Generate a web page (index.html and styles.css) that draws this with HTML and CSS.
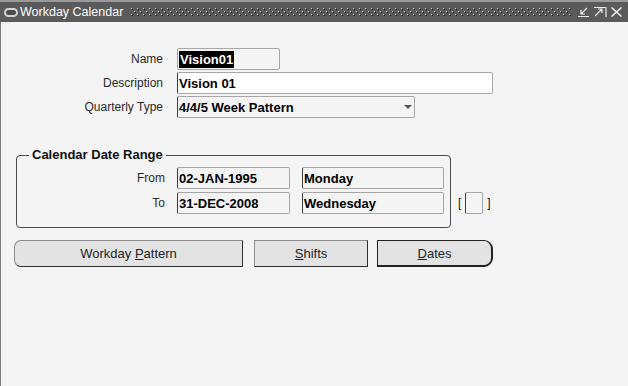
FILE: index.html
```html
<!DOCTYPE html>
<html>
<head>
<meta charset="utf-8">
<title>Workday Calendar</title>
<link rel="stylesheet" href="styles.css">
</head>
<body>
<div class="window">
  <div class="titlebar">
    <span class="app-icon"></span>
    <span class="title">Workday Calendar</span>
    <svg class="dots" height="9" preserveAspectRatio="none">
      <defs>
        <pattern id="dotpat" width="6" height="6" patternUnits="userSpaceOnUse">
          <rect x="0" y="0" width="1" height="1" fill="#cfcfcf"/>
          <rect x="1" y="1" width="1" height="1" fill="#111"/>
          <rect x="3" y="3" width="1" height="1" fill="#cfcfcf"/>
          <rect x="4" y="4" width="1" height="1" fill="#111"/>
        </pattern>
      </defs>
      <rect x="0" y="0" width="100%" height="9" fill="url(#dotpat)"/>
    </svg>
    <div class="controls">
      <svg class="ctl ctl-min" width="11" height="10" viewBox="0 0 11 10">
        <path d="M9 1 L3 7 M3 3 V7 H7 M0 9.5 H11" stroke="#eeeeee" stroke-width="1.2" fill="none"/>
      </svg>
      <svg class="ctl ctl-max" width="13" height="10" viewBox="0 0 13 10">
        <path d="M0 0.5 H11 M12 0 V10 M1 9 L8 2 M4 2 H8 V6" stroke="#eeeeee" stroke-width="1.2" fill="none"/>
      </svg>
      <svg class="ctl ctl-close" width="11" height="10" viewBox="0 0 11 10">
        <path d="M0.5 0.5 L10.5 9.5 M10.5 0.5 L0.5 9.5" stroke="#eeeeee" stroke-width="1.5" fill="none"/>
      </svg>
    </div>
  </div>

  <div class="content">
    <div class="form">
      <span class="lbl">Name</span>
      <div class="field ro f-name"><span class="sel">Vision01</span></div>
      <span class="lbl">Description</span>
      <div class="field white f-desc">Vision 01</div>
      <span class="lbl">Quarterly Type</span>
      <div class="field ro f-select"><span class="sel-text">4/4/5 Week Pattern</span><span class="arrow"></span></div>
    </div>

    <div class="range-row">
      <fieldset class="group">
        <legend>Calendar Date Range</legend>
        <div class="dates">
          <span class="lbl">From</span>
          <div class="field ro f-date">02-JAN-1995</div>
          <div class="field ro f-day">Monday</div>
          <span class="lbl">To</span>
          <div class="field ro f-date">31-DEC-2008</div>
          <div class="field ro f-day">Wednesday</div>
        </div>
      </fieldset>
      <div class="bracket"><span>[</span><span class="check"></span><span>]</span></div>
    </div>

    <div class="buttons">
      <button class="btn btn-wide"><span>Workday <u>P</u>attern</span></button>
      <button class="btn btn-shifts"><span><u>S</u>hifts</span></button>
      <button class="btn btn-dates"><span><u>D</u>ates</span></button>
    </div>
  </div>
</div>
</body>
</html>
```

FILE: styles.css
```css
* { box-sizing: border-box; }

html, body {
  margin: 0;
  padding: 0;
}

body {
  width: 628px;
  height: 386px;
  overflow: hidden;
  background: #f4f4f4;
  font-family: "Liberation Sans", Arial, sans-serif;
  font-size: 12px;
  color: #2a2a2a;
}

.window {
  height: 386px;
  display: flex;
  flex-direction: column;
}

/* ---------- title bar ---------- */
.titlebar {
  height: 22px;
  flex: none;
  border-top: 2px solid #9a9a9a;
  background: #5a5a5a;
  display: flex;
  align-items: center;
  padding: 0 4px 0 4px;
  color: #ffffff;
}

.app-icon {
  flex: none;
  width: 14px;
  height: 9px;
  border: 2px solid #d6d6d6;
  border-radius: 5px;
  background: #4c4c4c;
  margin-right: 2px;
}

.title {
  font-size: 12.5px;
  line-height: 20px;
  white-space: nowrap;
}

.dots {
  flex: 1;
  height: 9px;
  margin-left: 8px;
  margin-right: 7px;
}

.controls {
  display: flex;
  align-items: center;
}

.ctl { display: block; }
.ctl-max { margin-left: 5px; }
.ctl-close { margin-left: 4px; margin-right: 2px; }

/* ---------- content ---------- */
.content {
  flex: 1;
  border-left: 1px solid #7c7c7c;
}

.form {
  margin-top: 26px;
  display: grid;
  grid-template-columns: 162px auto;
  column-gap: 14px;
  row-gap: 2px;
  align-items: center;
  justify-items: start;
}

.lbl {
  justify-self: end;
  font-size: 12px;
  color: #2a2a2a;
  white-space: nowrap;
}

.field {
  height: 22px;
  display: flex;
  align-items: center;
  padding-left: 1px;
  border: 1px solid #a6a6a6;
  border-left-color: #3c3c3c;
  border-radius: 2px;
  font-size: 13px;
  font-weight: bold;
  color: #000;
  white-space: nowrap;
  overflow: hidden;
}

.field.ro { background: #f4f4f4; }
.field.white { background: #ffffff; }

.f-name { width: 103px; border-left-color: #a6a6a6; }
.f-desc { width: 316px; }
.f-select { width: 238px; }

.sel {
  background: #000;
  color: #fff;
  line-height: 17px;
  padding: 0 1px;
}

.sel-text { flex: 1; }

.arrow {
  width: 0;
  height: 0;
  border-left: 4px solid transparent;
  border-right: 4px solid transparent;
  border-top: 4px solid #555;
  margin-right: 2px;
}

/* ---------- date range group ---------- */
.range-row {
  display: flex;
  align-items: flex-end;
}

.group {
  margin: 29px 0 0 15px;
  padding: 4px 6px 13px 0;
  border: 1px solid #4a4a4a;
  border-radius: 4px;
  min-width: 0;
}

.group legend {
  margin-left: 12px;
  padding: 0 3px;
  font-size: 13px;
  font-weight: bold;
  line-height: 16px;
  color: #111;
}

.dates {
  display: grid;
  grid-template-columns: 148px 113px 142px;
  column-gap: 12px;
  row-gap: 3px;
  align-items: center;
}

.dates .lbl { justify-self: end; }

.bracket {
  display: flex;
  align-items: center;
  gap: 4px;
  margin: 0 0 14px 7px;
  height: 22px;
  font-size: 12px;
  color: #222;
}

.check {
  width: 18px;
  height: 22px;
  border: 1px solid #a6a6a6;
  border-left-color: #3c3c3c;
  border-radius: 2px;
  background: #f4f4f4;
}

/* ---------- buttons ---------- */
.buttons {
  display: flex;
  margin: 12px 0 0 13px;
}

.btn {
  height: 27px;
  padding: 0;
  margin: 0;
  background: #e3e3e3;
  border: 1px solid #8c8c8c;
  border-right-color: #2e2e2e;
  border-bottom-color: #2e2e2e;
  font-family: "Liberation Sans", Arial, sans-serif;
  font-size: 13px;
  color: #222;
  display: flex;
  align-items: center;
  justify-content: center;
  white-space: nowrap;
}

.btn-wide {
  width: 229px;
  border-radius: 7px 0 0 7px;
}

.btn-shifts {
  width: 114px;
  margin-left: 11px;
}

.btn-dates {
  width: 116px;
  margin-left: 9px;
  border: 1px solid #222;
  border-right-width: 2px;
  border-bottom-width: 2px;
  border-radius: 0 9px 9px 0;
}
```
